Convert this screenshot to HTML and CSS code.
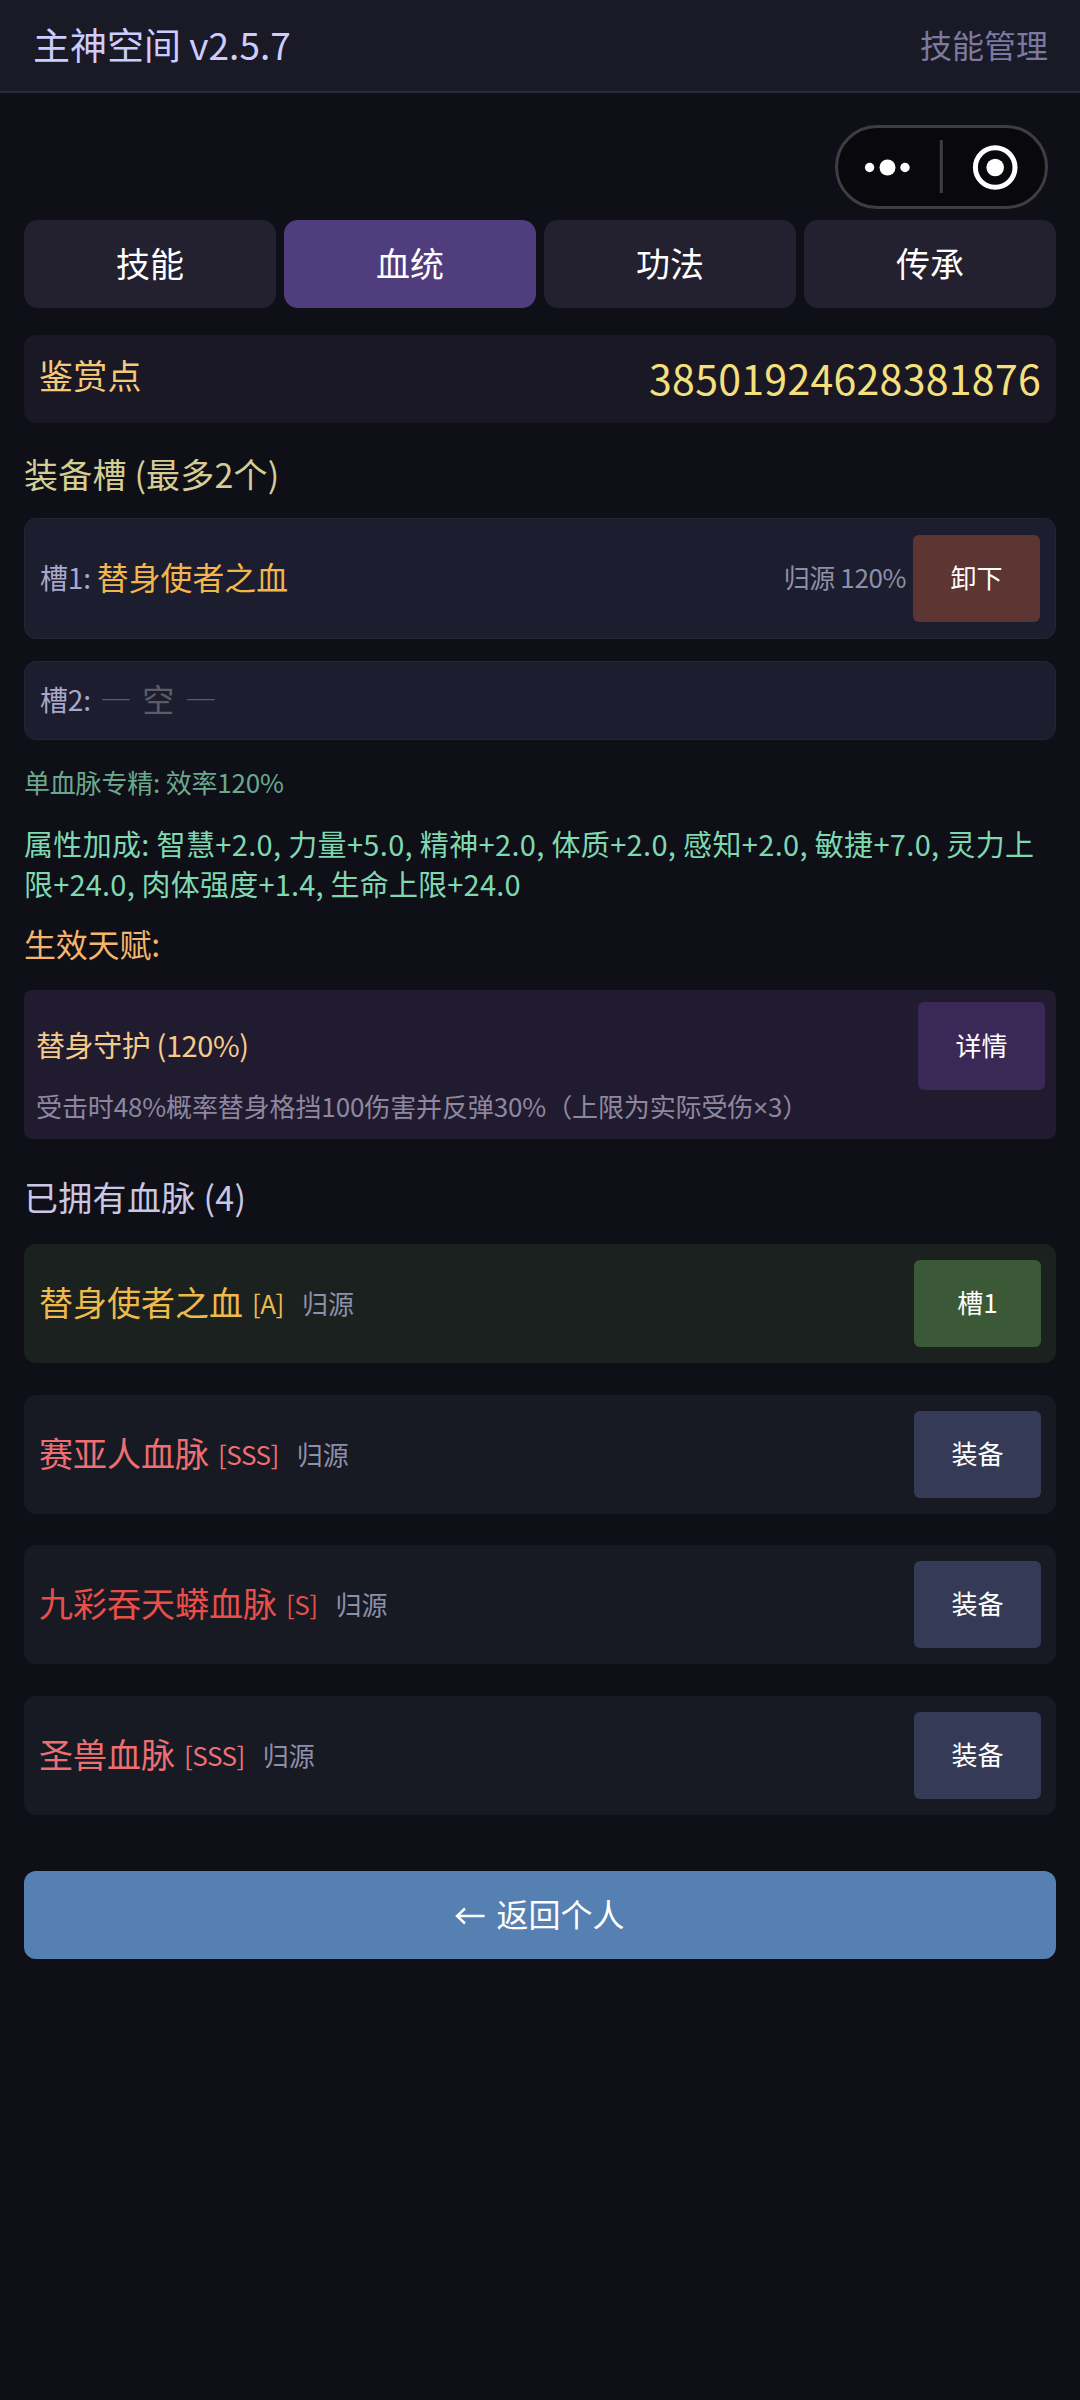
FILE: index.html
```html
<!DOCTYPE html>
<html lang="zh-CN">
<head>
<meta charset="utf-8">
<title>主神空间</title>
<link rel="stylesheet" href="styles.css">
</head>
<body>
<header class="topbar">
  <h1 class="topbar-title">主神空间 v2.5.7</h1>
  <span class="topbar-page">技能管理</span>
</header>

<div class="capsule">
  <svg width="213" height="84" viewBox="0 0 213 84">
    <rect x="1.5" y="1.5" width="210" height="81" rx="40.5" fill="#09090d" stroke="#3d3d42" stroke-width="3"/>
    <circle cx="34.6" cy="42.5" r="4.7" fill="#fff"/>
    <circle cx="52.5" cy="42.5" r="8" fill="#fff"/>
    <circle cx="70" cy="42.5" r="4.7" fill="#fff"/>
    <rect x="104.8" y="15" width="3" height="53" fill="#3d3d42"/>
    <circle cx="160.2" cy="42.5" r="19.8" fill="none" stroke="#fff" stroke-width="5"/>
    <circle cx="160.2" cy="42.5" r="8.8" fill="#fff"/>
  </svg>
</div>

<main class="content">
  <nav class="tabs">
    <button class="tab">技能</button>
    <button class="tab tab-active">血统</button>
    <button class="tab">功法</button>
    <button class="tab">传承</button>
  </nav>

  <section class="points">
    <span class="points-label">鉴赏点</span>
    <span class="points-value">38501924628381876</span>
  </section>

  <h2 class="slots-title">装备槽 (最多2个)</h2>
  <div class="slot slot-filled">
    <span class="slot-label">槽1:</span>
    <span class="slot-name">替身使者之血</span>
    <span class="slot-rate">归源 120%</span>
    <button class="btn btn-remove">卸下</button>
  </div>
  <div class="slot slot-empty">
    <span class="slot-label">槽2:</span>
    <span class="slot-none">— 空 —</span>
  </div>

  <p class="focus">单血脉专精: 效率120%</p>
  <p class="bonus">属性加成: 智慧+2.0, 力量+5.0, 精神+2.0, 体质+2.0, 感知+2.0, 敏捷+7.0, 灵力上<br><span class="bonus-rest">限+24.0, 肉体强度+1.4, 生命上限+24.0</span></p>
  <h3 class="talent-title">生效天赋:</h3>

  <section class="talent">
    <div class="talent-head">
      <span class="talent-name">替身守护 (120%)</span>
      <button class="btn btn-detail">详情</button>
    </div>
    <p class="talent-desc">受击时48%概率替身格挡100伤害并反弹30%（上限为实际受伤<span class="times">×</span>3）</p>
  </section>

  <h2 class="owned-title">已拥有血脉 (4)</h2>
  <ul class="owned">
    <li class="blood blood-equipped rank-a">
      <span class="blood-name">替身使者之血</span><span class="blood-rank">[A]</span><span class="blood-state">归源</span>
      <button class="btn btn-slot">槽1</button>
    </li>
    <li class="blood rank-sss">
      <span class="blood-name">赛亚人血脉</span><span class="blood-rank">[SSS]</span><span class="blood-state">归源</span>
      <button class="btn btn-equip">装备</button>
    </li>
    <li class="blood rank-s">
      <span class="blood-name">九彩吞天蟒血脉</span><span class="blood-rank">[S]</span><span class="blood-state">归源</span>
      <button class="btn btn-equip">装备</button>
    </li>
    <li class="blood rank-sss">
      <span class="blood-name">圣兽血脉</span><span class="blood-rank">[SSS]</span><span class="blood-state">归源</span>
      <button class="btn btn-equip">装备</button>
    </li>
  </ul>

  <button class="back">
    <svg class="back-arrow" width="30" height="18" viewBox="0 0 30 18" fill="none" stroke="#fff" stroke-width="2.4"><path d="M29.5 9H2M10 1.5L2 9l8 7.5"/></svg>
    返回个人
  </button>
</main>
</body>
</html>
```

FILE: styles.css
```css
* { box-sizing: border-box; margin: 0; padding: 0; }

body {
  min-height: 2400px;
  background: #0e0f17;
  color: #fff;
  font-family: "Noto Sans CJK SC", sans-serif;
  font-size: 26px;
}

h1, h2, h3 { font-weight: 400; }
button { border: 0; color: #fff; font-family: inherit; font-weight: 400; }
ul { list-style: none; }

.topbar {
  display: flex;
  justify-content: space-between;
  align-items: center;
  height: 93px;
  padding: 0 32px 4px 33px;
  background: #1a1926;
  border-bottom: 2px solid #2b2a38;
}
.topbar-title { font-size: 37px; line-height: 50px; color: #ccccff; }
.topbar-page { font-size: 32px; line-height: 44px; color: #7c7aa0; }

.capsule { position: absolute; left: 835px; top: 125px; width: 213px; height: 84px; }
.capsule svg { display: block; }

.content { padding: 127px 24px 0; display: flex; flex-direction: column; }

.tabs { display: grid; grid-template-columns: repeat(4, 1fr); gap: 8px; }
.tab { height: 88px; padding-bottom: 4px; border-radius: 14px; background: #232130; font-size: 34px; }
.tab-active { background: #4f3d7d; }

.points {
  display: flex;
  justify-content: space-between;
  align-items: center;
  height: 88px;
  margin-top: 27px;
  padding: 0 15px;
  border-radius: 12px;
  background: #1a1824;
}
.points-label { font-size: 34px; line-height: 48px; padding-bottom: 8px; letter-spacing: 0.2px; color: #f5c977; }
.points-value { font-size: 41px; line-height: 60px; padding-bottom: 4px; letter-spacing: 0.3px; color: #f5e07e; }

.slots-title { margin-top: 27px; font-size: 34px; line-height: 48px; letter-spacing: 0.2px; color: #d5ce94; }

.slot {
  display: flex;
  align-items: center;
  padding: 0 15px;
  border: 1px solid #242635;
  border-radius: 12px;
  background: #1c1d2e;
}
.slot-filled { height: 121px; margin-top: 20px; }
.slot-empty { height: 79px; margin-top: 22px; }
.slot-label { margin-right: 6px; padding-bottom: 4px; font-size: 28px; letter-spacing: -0.2px; color: #a9a8cb; }
.slot-name { padding-bottom: 6px; font-size: 31.9px; color: #f2b64c; }
.slot-none { margin-left: 3px; padding-bottom: 5px; font-size: 32.1px; color: #5b5c65; letter-spacing: 1.6px; }
.slot-rate { margin-left: auto; margin-right: 7px; padding-bottom: 4px; letter-spacing: -0.4px; color: #8e8fa9; }

.btn { width: 127px; height: 87px; padding-bottom: 4px; border-radius: 6px; font-size: 26px; }
.btn-remove { background: #5d3533; }
.btn-detail { background: #3a2856; height: 88px; }
.btn-slot { background: #3b5936; }
.btn-equip { background: #353b56; }

.focus { margin-top: 23px; line-height: 38px; font-size: 26px; letter-spacing: -0.2px; color: #6ba98e; }
.bonus { margin-top: 22px; line-height: 40px; font-size: 29px; letter-spacing: 0.34px; color: #7fd8b0; white-space: nowrap; }
.bonus-rest { letter-spacing: 0.2px; }
.talent-title { margin-top: 18px; line-height: 44px; font-size: 32px; letter-spacing: -0.2px; color: #f5b56b; }

.talent {
  height: 149px;
  margin-top: 25px;
  padding: 12px 11px 0 12px;
  border-radius: 8px;
  background: #211b2f;
}
.talent-head { display: flex; justify-content: space-between; align-items: center; }
.talent-name { padding-bottom: 4px; font-size: 29px; letter-spacing: -0.4px; color: #f5ca8a; }
.talent-desc { line-height: 32px; font-size: 26px; letter-spacing: -0.12px; color: #8f87a0; white-space: nowrap; }
.times { font-family: "Noto Sans", sans-serif; line-height: 1; }

.owned-title { margin-top: 34px; line-height: 48px; font-size: 34px; letter-spacing: 0.3px; color: #cac7e3; }

.owned { display: flex; flex-direction: column; gap: 31.6px; margin-top: 23px; }
.blood {
  display: flex;
  align-items: center;
  height: 119px;
  padding: 0 15px;
  border-radius: 12px;
  background: #171923;
}
.blood-equipped { background: #1b211e; }
.blood-name { padding-bottom: 4px; font-size: 34px; }
.blood-rank { margin-left: 9px; padding-bottom: 2px; font-size: 26px; letter-spacing: -0.5px; }
.blood-state { margin-left: 18px; padding-bottom: 2px; font-size: 26px; color: #8e8fa9; }
.blood .btn { margin-left: auto; }
.rank-a { color: #efb94c; }
.rank-s { color: #e84f48; }
.rank-sss { color: #ee6f72; }

.back {
  display: flex;
  justify-content: center;
  align-items: center;
  gap: 11px;
  height: 88px;
  margin-top: 56px;
  padding-bottom: 4px;
  border-radius: 12px;
  background: #5680b1;
  font-size: 32px;
}
.back-arrow { position: relative; top: 3px; }
```
